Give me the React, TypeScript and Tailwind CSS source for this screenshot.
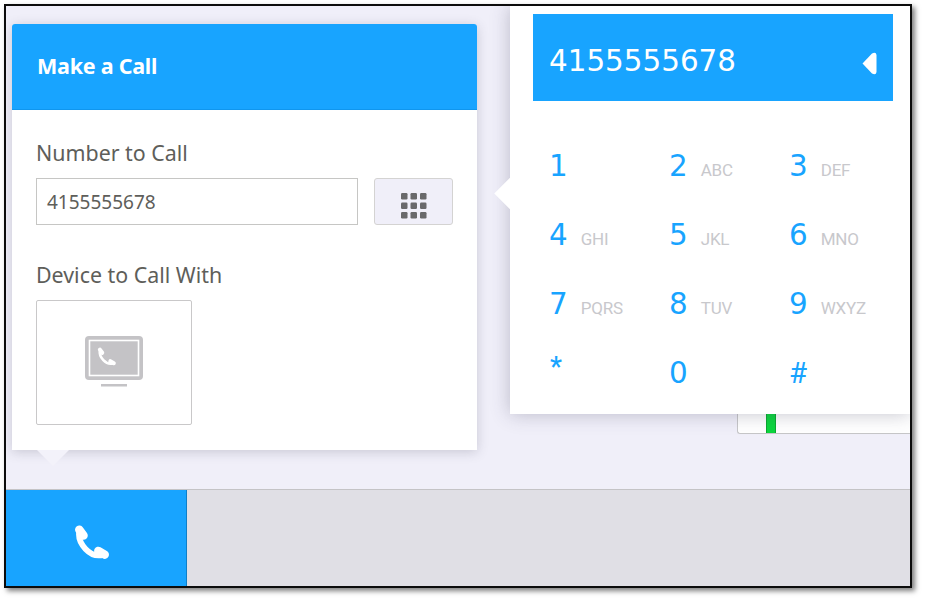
const KEYS = [
  ['1', ''], ['2', 'ABC'], ['3', 'DEF'],
  ['4', 'GHI'], ['5', 'JKL'], ['6', 'MNO'],
  ['7', 'PQRS'], ['8', 'TUV'], ['9', 'WXYZ'],
  ['*', ''], ['0', ''], ['#', ''],
]

function PhoneIcon({ size, color }: { size: number; color: string }) {
  return (
    <svg width={size} height={size} viewBox="0 0 34 34" fill="none" stroke={color} strokeLinecap="round">
      <path d="M5 6C3 17 15 32 28 28" strokeWidth="5.5" />
      <path d="M5 4.5L9 10" strokeWidth="8" />
      <path d="M23 24.5L29 28" strokeWidth="8" />
    </svg>
  )
}

function KeypadIcon() {
  return (
    <svg width="26" height="26" viewBox="0 0 26 26" fill="#69696b">
      {[0, 9.5, 19].map((y) =>
        [0, 9.5, 19].map((x) => <rect key={`${x}-${y}`} x={x} y={y} width="6.5" height="6.5" rx="1.2" />),
      )}
    </svg>
  )
}

function DeviceIcon() {
  return (
    <svg width="58" height="51" viewBox="0 0 58 51">
      <rect x="0" y="0" width="58" height="44" rx="4" fill="#c4c3c6" />
      <rect x="4.5" y="4.5" width="49" height="35" fill="#c4c3c6" stroke="#fff" strokeWidth="1.6" />
      <g transform="translate(12 11) scale(0.58)" fill="none" stroke="#fff" strokeLinecap="round">
        <path d="M5 6C3 17 15 32 28 28" strokeWidth="4.5" />
        <path d="M5 4.5L9 10" strokeWidth="7" />
        <path d="M23 24.5L29 28" strokeWidth="7" />
      </g>
      <rect x="16" y="48" width="26" height="2.5" fill="#c4c3c6" />
    </svg>
  )
}

function MakeCallPanel() {
  return (
    <div className="absolute left-[6px] top-[18px] w-[465px] h-[426px] bg-white rounded-t-[3px] shadow-[0_2px_12px_rgba(60,60,80,0.22)] font-['Noto_Sans',sans-serif]">
      <div className="h-[86px] flex items-center pl-[25px] bg-[#18a4ff] rounded-t-[3px] border-b border-[#1096ee]">
        <h2 className="text-[21.5px] font-bold tracking-[-0.25px] text-white">Make a Call</h2>
      </div>
      <div className="pl-[24px] pt-[31px]">
        <div className="text-[21.4px] leading-[24px] text-[#5e5e5a] mb-[13px]">Number to Call</div>
        <div className="flex gap-[16px]">
          <div className="w-[322px] h-[47px] flex items-center pl-[10px] pt-[2px] border border-[#c6c6c4] text-[19px] text-[#5e5e5a]">
            4155555678
          </div>
          <button className="w-[79px] h-[47px] flex items-center justify-center pt-[8px] bg-[#f0eff9] border border-[#d4d3d2] rounded-[3px]">
            <KeypadIcon />
          </button>
        </div>
        <div className="text-[21.4px] leading-[24px] text-[#5e5e5a] mt-[38px] mb-[13px]">Device to Call With</div>
        <div className="w-[156px] h-[125px] flex items-center justify-center pb-[2px] border border-[#c9c8c9] rounded-[2px]">
          <DeviceIcon />
        </div>
      </div>
      <div className="absolute left-[25px] top-full w-[32px] h-[16px] bg-[#f3f2fa] [clip-path:polygon(0_0,100%_0,50%_100%)]" />
    </div>
  )
}

function DialPad() {
  return (
    <div className="absolute left-[504px] top-0 right-0 h-[408px] bg-white shadow-[0_0_18px_rgba(60,60,90,0.3)]">
      <div className="absolute left-[-11.5px] top-[175.5px] w-[23px] h-[23px] rotate-45 bg-white" />
      <div className="relative ml-[23px] mt-[8px] w-[360px] h-[87px] flex items-center justify-between pl-[16px] pr-[16px] bg-[#18a4ff]">
        <span className="text-[29.4px] leading-none pt-[9px] text-white font-['DejaVu_Sans',sans-serif]">4155555678</span>
        <svg className="mt-[11px]" width="15" height="23" viewBox="0 0 15 23" fill="#fff">
          <path d="M0.5 11.5L10 1.5Q14 -0.5 14.5 3V20Q14 23.5 10 21.5Z" />
        </svg>
      </div>
      <div className="grid grid-cols-[120px_120px_120px] auto-rows-[69px] ml-[39px] mt-[31px]">
        {KEYS.map(([digit, letters]) => (
          <div key={digit} className="flex items-baseline gap-[13px]">
            <span
              className={
                digit === '*'
                  ? "text-[27px] leading-[69px] font-medium text-[#18a4ff] font-['Roboto',sans-serif] -translate-y-[6px] translate-x-[1px]"
                  : digit === '#'
                    ? "text-[29.4px] leading-[69px] text-[#18a4ff] font-['Roboto',sans-serif]"
                    : "text-[29.4px] leading-[69px] text-[#18a4ff] font-['DejaVu_Sans',sans-serif]"
              }
            >
              {digit}
            </span>
            {letters && <span className="text-[17px] tracking-[-0.2px] text-[#c8c8cc] font-['Roboto',sans-serif]">{letters}</span>}
          </div>
        ))}
      </div>
    </div>
  )
}

export default function App() {
  return (
    <div className="w-[925px] h-[601px] bg-white pl-[4px] pt-[4px]">
      <div className="relative w-[908px] h-[584px] flex flex-col border-2 border-[#0c0c0c] bg-[#f0eff9] overflow-hidden shadow-[3px_3px_5px_rgba(0,0,0,0.5)]">
        <div className="flex-1 flex justify-end items-start pt-[374px]">
          <div className="relative w-[173px] h-[54px] bg-white border-l border-b border-[#c6c6c8] rounded-bl-[3px]">
            <div className="absolute left-[28px] bottom-0 w-[10px] h-[30px] bg-[#0cd63e] border-x border-[#0aa830]" />
          </div>
        </div>
        <div className="h-[97px] flex bg-[#e0dfe5] border-t border-[#c4c3c6]">
          <button className="w-[181px] flex items-center justify-center pt-[9px] pr-[9px] bg-[#18a4ff] border-r border-[#0f7fc8]">
            <PhoneIcon size={36} color="#fff" />
          </button>
        </div>
        <MakeCallPanel />
        <DialPad />
      </div>
    </div>
  )
}
